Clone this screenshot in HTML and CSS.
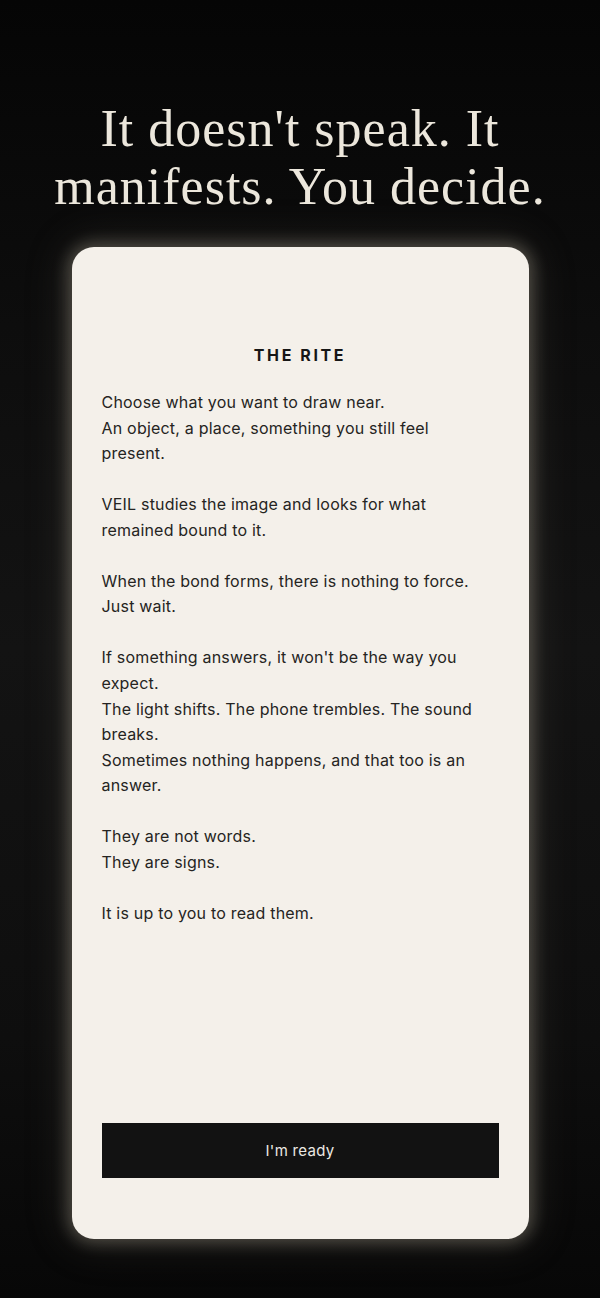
FILE: index.html
```html
<!DOCTYPE html>
<html lang="en">
<head>
<meta charset="utf-8">
<link rel="stylesheet" href="styles.css">
</head>
<body>
<main class="screen">
  <h1 class="headline">It doesn't speak. It manifests. You decide.</h1>
  <section class="card">
    <h2 class="card-title">THE RITE</h2>
    <div class="card-body">
      <p>Choose what you want to draw near.<br>An object, a place, something you still feel present.</p>
      <p>VEIL studies the image and looks for what remained bound to it.</p>
      <p>When the bond forms, there is nothing to force.<br>Just wait.</p>
      <p>If something answers, it won't be the way you expect.<br>The light shifts. The phone trembles. The sound breaks.<br>Sometimes nothing happens, and that too is an answer.</p>
      <p>They are not words.<br>They are signs.</p>
      <p>It is up to you to read them.</p>
    </div>
    <button class="ready-btn" type="button">I'm ready</button>
  </section>
</main>
</body>
</html>
```
FILE: styles.css
```css
html, body {
  margin: 0;
  padding: 0;
}
body {
  background: linear-gradient(180deg, #050505 0%, #0d0d0d 25%, #131313 50%, #0e0e0e 80%, #070707 100%);
  min-height: 1298px;
}
.screen {
  display: flex;
  flex-direction: column;
  align-items: center;
  padding-top: 100px;
}
.headline {
  margin: 0;
  width: 560px;
  text-align: center;
  font-family: "Liberation Serif", "Times New Roman", serif;
  font-weight: 400;
  font-size: 52px;
  line-height: 58px;
  color: #ece7dc;
  letter-spacing: 1px;
}
.card {
  margin-top: 31px;
  width: 457px;
  height: 992px;
  box-sizing: border-box;
  background: #f4f0ea;
  border-radius: 22px;
  box-shadow: 0 0 16px 4px rgba(200, 190, 170, 0.33), 0 0 40px 10px rgba(120, 112, 100, 0.16);
  padding: 98px 30px 61px;
  display: flex;
  flex-direction: column;
}
.card-title {
  margin: 0;
  text-align: center;
  font-family: Inter, "Liberation Sans", sans-serif;
  font-weight: 700;
  font-size: 16px;
  letter-spacing: 2.6px;
  line-height: 20px;
  color: #161616;
}
.card-body {
  margin-top: 25px;
  padding-right: 6px;
  font-family: Inter, "Liberation Sans", sans-serif;
  font-size: 16px;
  line-height: 25.55px;
  color: #252422;
  letter-spacing: 0.2px;
}
.card-body p {
  margin: 0 0 25.55px;
}
.ready-btn {
  margin-top: auto;
  width: 100%;
  height: 55px;
  background: #121212;
  color: #ece9e3;
  border: 0;
  border-radius: 0;
  font-family: Inter, "Liberation Sans", sans-serif;
  font-size: 15px;
  letter-spacing: 0.3px;
}
```
